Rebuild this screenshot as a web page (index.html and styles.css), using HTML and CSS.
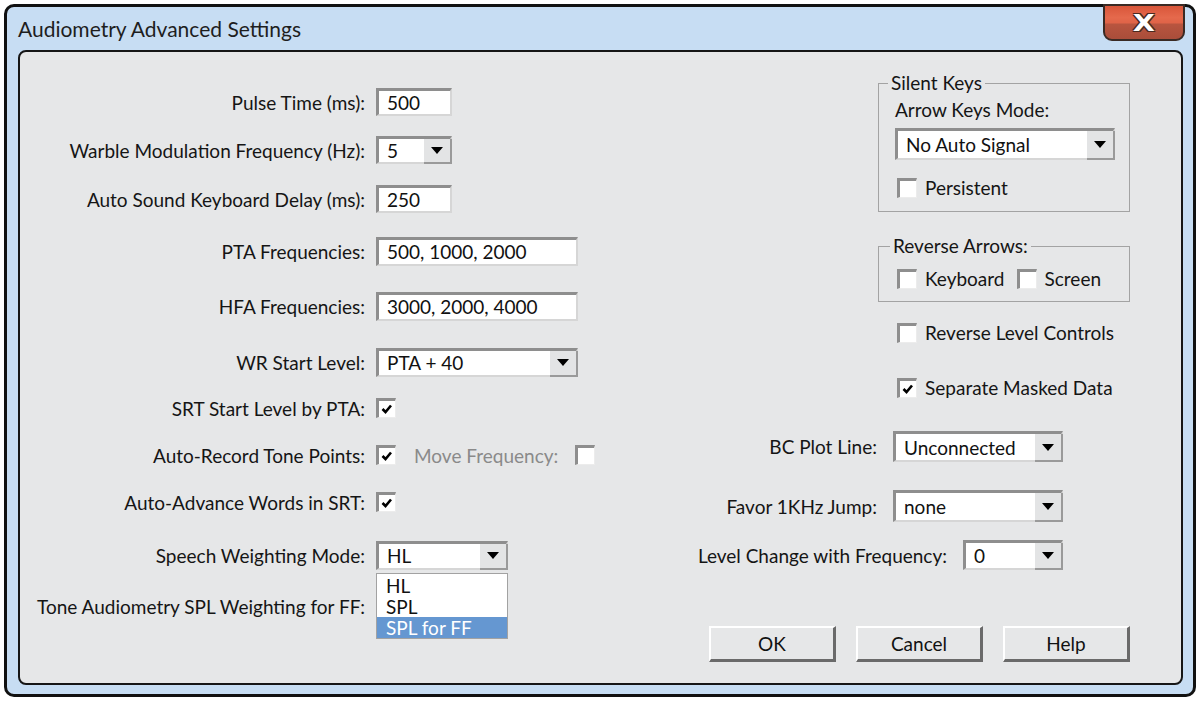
FILE: index.html
```html
<!DOCTYPE html>
<html>
<head>
<meta charset="utf-8">
<link rel="stylesheet" href="styles.css">
</head>
<body>
<div class="window">
  <div class="titlebar">
    <span class="title">Audiometry Advanced Settings</span>
    <div class="close"><span>X</span></div>
  </div>
  <div class="panel">
    <div class="left">
      <div class="row r1"><span class="lbl">Pulse Time (ms):</span><div class="field w76 h28"><span class="val">500</span></div></div>
      <div class="row r2"><span class="lbl">Warble Modulation Frequency (Hz):</span><div class="field select w76 h28"><span class="val">5</span><span class="drop"><svg width="12" height="7" viewBox="0 0 12 7"><path d="M0 0H12L6 7Z" fill="#000"/></svg></span></div></div>
      <div class="row r3"><span class="lbl">Auto Sound Keyboard Delay (ms):</span><div class="field w76 h28"><span class="val">250</span></div></div>
      <div class="row r4"><span class="lbl">PTA Frequencies:</span><div class="field w202"><span class="val">500, 1000, 2000</span></div></div>
      <div class="row r5"><span class="lbl">HFA Frequencies:</span><div class="field w202"><span class="val">3000, 2000, 4000</span></div></div>
      <div class="row r6"><span class="lbl">WR Start Level:</span><div class="field select w202"><span class="val">PTA + 40</span><span class="drop"><svg width="12" height="7" viewBox="0 0 12 7"><path d="M0 0H12L6 7Z" fill="#000"/></svg></span></div></div>
      <div class="row r7"><span class="lbl">SRT Start Level by PTA:</span><span class="cb checked"><svg width="14" height="12" viewBox="0 0 14 12"><path d="M2.5 6 L5.5 9 L11 2.5" fill="none" stroke="#000" stroke-width="2.6"/></svg></span></div>
      <div class="row r8"><span class="lbl">Auto-Record Tone Points:</span><span class="cb checked"><svg width="14" height="12" viewBox="0 0 14 12"><path d="M2.5 6 L5.5 9 L11 2.5" fill="none" stroke="#000" stroke-width="2.6"/></svg></span><span class="muted">Move Frequency:</span><span class="cb"></span></div>
      <div class="row r9"><span class="lbl">Auto-Advance Words in SRT:</span><span class="cb checked"><svg width="14" height="12" viewBox="0 0 14 12"><path d="M2.5 6 L5.5 9 L11 2.5" fill="none" stroke="#000" stroke-width="2.6"/></svg></span></div>
      <div class="row r10"><span class="lbl">Speech Weighting Mode:</span>
        <div class="combo">
          <div class="field select w132"><span class="val">HL</span><span class="drop"><svg width="12" height="7" viewBox="0 0 12 7"><path d="M0 0H12L6 7Z" fill="#000"/></svg></span></div>
          <ul class="list">
            <li>HL</li>
            <li>SPL</li>
            <li class="sel">SPL for FF</li>
          </ul>
        </div>
      </div>
      <div class="row r11"><span class="lbl">Tone Audiometry SPL Weighting for FF:</span></div>
    </div>
    <div class="right">
      <fieldset class="group silent">
        <legend>Silent Keys</legend>
        <div class="sub">Arrow Keys Mode:</div>
        <div class="field select w220 h32"><span class="val">No Auto Signal</span><span class="drop"><svg width="12" height="7" viewBox="0 0 12 7"><path d="M0 0H12L6 7Z" fill="#000"/></svg></span></div>
        <div class="check persist"><span class="cb"></span><span>Persistent</span></div>
      </fieldset>
      <fieldset class="group reverse">
        <legend>Reverse Arrows:</legend>
        <div class="pair">
          <div class="check"><span class="cb"></span><span>Keyboard</span></div>
          <div class="check"><span class="cb"></span><span>Screen</span></div>
        </div>
      </fieldset>
      <div class="check solo levelctl"><span class="cb"></span><span>Reverse Level Controls</span></div>
      <div class="check solo masked"><span class="cb checked"><svg width="14" height="12" viewBox="0 0 14 12"><path d="M2.5 6 L5.5 9 L11 2.5" fill="none" stroke="#000" stroke-width="2.6"/></svg></span><span>Separate Masked Data</span></div>
      <div class="rrow bc"><span class="rlbl">BC Plot Line:</span><div class="field select w170 h31"><span class="val">Unconnected</span><span class="drop"><svg width="12" height="7" viewBox="0 0 12 7"><path d="M0 0H12L6 7Z" fill="#000"/></svg></span></div></div>
      <div class="rrow favor"><span class="rlbl">Favor 1KHz Jump:</span><div class="field select w170 h32"><span class="val">none</span><span class="drop"><svg width="12" height="7" viewBox="0 0 12 7"><path d="M0 0H12L6 7Z" fill="#000"/></svg></span></div></div>
      <div class="rrow level"><span class="rlbl">Level Change with Frequency:</span><div class="field select w100 h30"><span class="val">0</span><span class="drop"><svg width="12" height="7" viewBox="0 0 12 7"><path d="M0 0H12L6 7Z" fill="#000"/></svg></span></div></div>
      <div class="buttons">
        <div class="btn">OK</div>
        <div class="btn">Cancel</div>
        <div class="btn">Help</div>
      </div>
    </div>
  </div>
</div>
</body>
</html>
```
FILE: styles.css
```css
* { box-sizing: border-box; }
body {
  margin: 0;
  background: #ffffff;
  font-family: Lato, "Open Sans", sans-serif;
  font-size: 19px;
  color: #151515;
}
.window {
  margin: 4px;
  width: 1192px;
  height: 693px;
  border: 3px solid #111;
  border-radius: 10px;
  background: #c7ddf3;
  position: relative;
  display: flex;
  flex-direction: column;
}
.titlebar {
  height: 43px;
  display: flex;
  align-items: center;
  padding-left: 11px;
  font-size: 21px;
  color: #1e1e1e;
}
.close {
  position: absolute;
  top: -3px;
  right: 8px;
  width: 82px;
  height: 37px;
  border: 2px solid #3a2a24;
  border-radius: 0 0 9px 9px;
  background: linear-gradient(#d9563a 0%, #e5694c 35%, #e06448 50%, #b8553f 56%, #a94d3a 100%);
  display: flex;
  align-items: center;
  justify-content: center;
}
.close span {
  font-family: "DejaVu Sans", sans-serif;
  font-weight: bold;
  font-size: 23px;
  color: #fff;
  transform: scaleX(1.25);
  text-shadow: -1px -1px 0 #4a2a20, 1px -1px 0 #4a2a20, -1px 1px 0 #4a2a20, 1px 1px 0 #4a2a20;
}
.panel {
  flex: 1;
  margin: 0 10px 9px 11px;
  border: 2px solid #161616;
  border-radius: 8px;
  background: #e6e7e8;
  display: flex;
}
.left {
  width: 600px;
  padding-top: 35px;
  display: flex;
  flex-direction: column;
}
.row {
  height: 30px;
  display: flex;
  align-items: center;
}
.r2 { margin-top: 18px; }
.r3 { margin-top: 19px; }
.r4 { margin-top: 22px; }
.r5 { margin-top: 25px; }
.r6 { margin-top: 26px; }
.r7 { margin-top: 16px; }
.r8 { margin-top: 17px; }
.r9 { margin-top: 17px; }
.r10 { margin-top: 23px; }
.r11 { margin-top: 21px; }
.lbl {
  width: 345px;
  margin-right: 11px;
  text-align: right;
  white-space: nowrap;
}
.field {
  height: 29px;
  background: #fff;
  border-style: solid;
  border-width: 3px 2px 2px 3px;
  border-color: #8e8e8e #d6d6d6 #d6d6d6 #8e8e8e;
  display: flex;
  align-items: center;
  position: relative;
}
.field .val {
  padding-left: 8px;
  flex: 1;
  white-space: nowrap;
  color: #111;
}
.h28 { height: 28px; }
.h30 { height: 30px; }
.h31 { height: 31px; }
.h32 { height: 32px; }
.w76 { width: 76px; }
.w100 { width: 100px; }
.w132 { width: 132px; }
.w170 { width: 170px; }
.w202 { width: 202px; }
.w220 { width: 220px; }
.select .drop {
  width: 28px;
  background: #e3e4e5;
  border-right: 2px solid #9a9a9a;
  border-bottom: 2px solid #9a9a9a;
  display: flex;
  align-items: center;
  justify-content: center;
  margin-right: -2px;
  margin-bottom: -2px;
  align-self: flex-start;
  height: calc(100% + 2px);
}
.cb {
  width: 20px;
  height: 20px;
  background: #fff;
  border-style: solid;
  border-width: 3px 1px 1px 3px;
  border-color: #8e8e8e #ececec #ececec #8e8e8e;
  display: inline-flex;
  align-items: center;
  justify-content: center;
  flex: none;
}
.muted {
  color: #8a8a8a;
  margin-left: 18px;
  margin-right: 17px;
}
.combo { position: relative; }
.list {
  position: absolute;
  left: 0;
  top: 32px;
  width: 132px;
  margin: 0;
  padding: 1px 0 0;
  list-style: none;
  background: #fff;
  border: 1px solid #a2a2a2;
  z-index: 2;
}
.list li {
  height: 21px;
  line-height: 21px;
  padding-left: 9px;
  color: #111;
}
.list li.sel {
  background: #6597d1;
  color: #fff;
}
.right {
  width: 440px;
  margin-left: 70px;
  padding-top: 21px;
  display: flex;
  flex-direction: column;
}
.group {
  align-self: flex-end;
  width: 252px;
  margin: 0;
  border: 1px solid #a3a3a3;
  padding: 7px 14px 13px 16px;
}
.group legend {
  padding: 0 3px;
  margin-left: -7px;
  line-height: 20px;
}
.sub { line-height: 20px; }
.silent .field { margin-top: 8px; }
.check {
  display: flex;
  align-items: center;
  height: 20px;
  line-height: 20px;
}
.check .cb { margin-right: 8px; }
.persist { margin-top: 18px; margin-left: 2px; }
.reverse {
  margin-top: 24px;
  padding: 13px 14px 12px 18px;
}
.pair { display: flex; }
.pair .check + .check { margin-left: 12px; }
.solo { margin-left: 207px; }
.levelctl { margin-top: 21px; }
.masked { margin-top: 35px; }
.rrow {
  display: flex;
  justify-content: flex-end;
  align-items: center;
  padding-right: 67px;
}
.rlbl { margin-right: 16px; white-space: nowrap; }
.bc { margin-top: 33px; }
.favor { margin-top: 28px; }
.level { margin-top: 18px; }
.buttons {
  margin-top: 56px;
  display: flex;
  justify-content: flex-end;
  gap: 20px;
}
.btn {
  width: 127px;
  height: 36px;
  background: #e6e7e8;
  border-style: solid;
  border-width: 2px 3px 3px 2px;
  border-color: #ffffff #6a6a6a #6a6a6a #ffffff;
  display: flex;
  align-items: center;
  justify-content: center;
  color: #111;
}
```
